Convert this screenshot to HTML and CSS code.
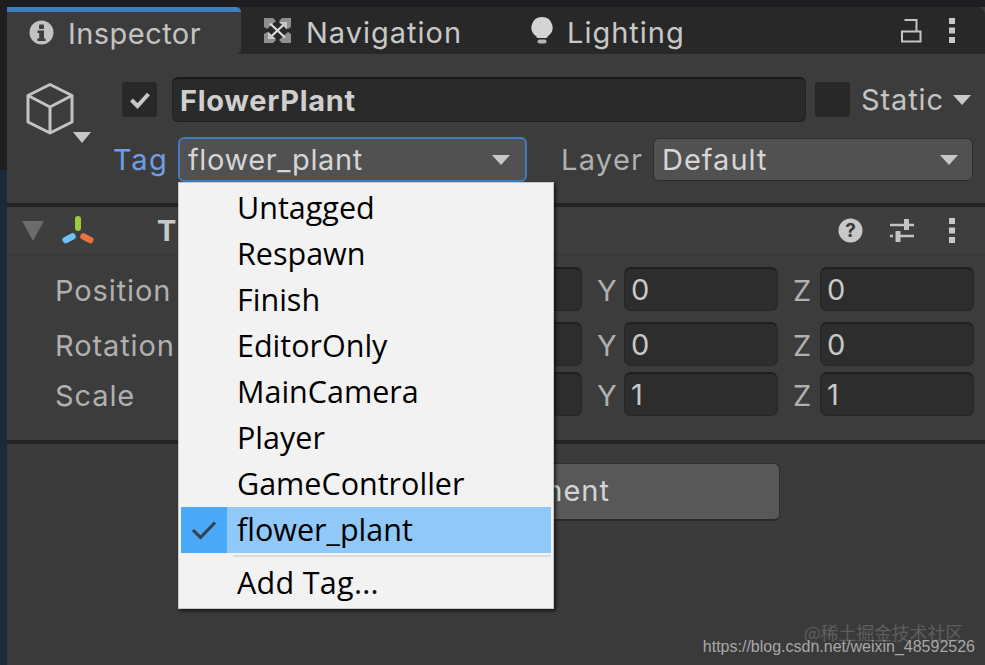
FILE: index.html
```html
<!DOCTYPE html>
<html lang="en">
<head>
<meta charset="utf-8">
<title>Inspector</title>
<link rel="stylesheet" href="styles.css">
</head>
<body>
<div class="window">
  <div class="tabs">
    <div class="tab active">
      <svg class="tab-icon" width="25" height="25" viewBox="0 0 25 25"><circle cx="12.500" cy="12.500" r="12" fill="#c2c2c2"/><rect x="10" y="4.500" width="5" height="4.400" rx="1" fill="#3c3c3c"/><path d="M8.500 10.500h6.500v8h1.600v2.400H8.400v-2.400h1.800v-5.600H8.500z" fill="#3c3c3c"/></svg>
      <span>Inspector</span>
    </div>
    <div class="tab nav">
      <svg class="tab-icon" width="27" height="25" viewBox="0 0 27 25"><path d="M0 0h9l3 3-9 8-3-2zM27 0h-9l-3 3 9 8 3-2zM0 25h9l3-3-9-8-3 2zM27 25h-9l-3-3 9-8 3 2z" fill="#8f8f8f"/><path d="M6 5.500L21 19.500M21 5.500L6 19.500" stroke="#dcdcdc" stroke-width="2.200"/><path d="M15 4h8v7.500zM12 21H4v-7.500z" fill="#c8c8c8"/></svg>
      <span>Navigation</span>
    </div>
    <div class="tab light">
      <svg class="tab-icon" width="22" height="27" viewBox="0 0 22 27"><path d="M11 0a10.500 10.500 0 0 1 6.200 19c-.7.600-1 1-1.200 2H6c-.2-1-.5-1.400-1.200-2A10.500 10.500 0 0 1 11 0z" fill="#d4d4d4"/><rect x="6.500" y="22.500" width="9" height="4" rx="2" fill="#b4b4b4"/></svg>
      <span>Lighting</span>
    </div>
    <div class="tab-tools">
      <svg width="21" height="25" viewBox="0 0 21 25"><path d="M1 13.500h18.500v10H1zM3.500 2H15.500V13" fill="none" stroke="#c4c4c4" stroke-width="2"/></svg>
      <svg class="dots" width="6" height="25" viewBox="0 0 6 25"><rect y="0" width="6" height="6" fill="#c8c8c8"/><rect y="9.500" width="6" height="6" fill="#c8c8c8"/><rect y="19" width="6" height="6" fill="#c8c8c8"/></svg>
    </div>
  </div>

  <div class="header">
    <div class="cube">
      <svg width="70" height="62" viewBox="0 0 70 62"><path d="M25 2.500L47 13.500V40L25 51 3 40V13.500zM3 13.500L25 25 47 13.500M25 25V51" fill="none" stroke="#c4c4c4" stroke-width="3" stroke-linejoin="round"/><path d="M48 50h18l-9 11z" fill="#c8c8c8"/></svg>
    </div>
    <div class="header-main">
      <div class="row-name">
        <div class="check on"><svg width="24" height="20" viewBox="0 0 24 20"><path d="M3.500 10l6 6L20.500 4" fill="none" stroke="#c8c8c8" stroke-width="4"/></svg></div>
        <div class="name-field">FlowerPlant</div>
        <div class="check"></div>
        <div class="static">Static</div>
        <i class="arrow"></i>
      </div>
      <div class="row-tag">
        <span class="tag-label">Tag</span>
        <div class="select focus"><span>flower_plant</span><i class="arrow"></i></div>
        <span class="layer-label">Layer</span>
        <div class="select layer"><span>Default</span><i class="arrow"></i></div>
      </div>
    </div>
  </div>

  <div class="comp-head">
    <svg class="fold" width="22" height="20" viewBox="0 0 22 20"><path d="M0 0h22L11 20z" fill="#6b6b6b"/></svg>
    <svg class="axes" width="34" height="30" viewBox="0 0 34 30"><rect x="14" y="0" width="6" height="15" rx="3" fill="#9ccc3c"/><rect x="1" y="19" width="14" height="6.500" rx="3" transform="rotate(-27 8 22)" fill="#6fc3f0"/><rect x="19" y="19" width="14" height="6.500" rx="3" transform="rotate(27 26 22)" fill="#ee6f3e"/></svg>
    <span class="comp-title">T</span>
    <div class="comp-tools">
      <svg width="25" height="25" viewBox="0 0 25 25"><circle cx="12.500" cy="12.500" r="12" fill="#c8c8c8"/><text x="12.500" y="19" class="q">?</text></svg>
      <svg width="26" height="25" viewBox="0 0 26 25"><path d="M1 7h14M20 7h5M1 18h3M9 18h16" fill="none" stroke="#c4c4c4" stroke-width="2.500"/><path d="M17.500 1v11M9 13v11" stroke="#c4c4c4" stroke-width="5"/></svg>
      <svg class="dots" width="6" height="25" viewBox="0 0 6 25"><rect y="0" width="6" height="6" fill="#c8c8c8"/><rect y="9.500" width="6" height="6" fill="#c8c8c8"/><rect y="19" width="6" height="6" fill="#c8c8c8"/></svg>
    </div>
  </div>

  <div class="comp-body">
    <div class="vec first">
      <span class="vec-label">Position</span>
      <span class="axis"></span><div class="num"></div>
      <span class="axis">Y</span><div class="num">0</div>
      <span class="axis">Z</span><div class="num">0</div>
    </div>
    <div class="vec second">
      <span class="vec-label">Rotation</span>
      <span class="axis"></span><div class="num"></div>
      <span class="axis">Y</span><div class="num">0</div>
      <span class="axis">Z</span><div class="num">0</div>
    </div>
    <div class="vec">
      <span class="vec-label">Scale</span>
      <span class="axis"></span><div class="num"></div>
      <span class="axis">Y</span><div class="num">1</div>
      <span class="axis">Z</span><div class="num">1</div>
    </div>
  </div>

  <div class="footer">
    <div class="add-btn">ment</div>
    <div class="marks">
      <span class="mark-cn">@稀土掘金技术社区</span>
      <span class="mark-url">https://blog.csdn.net/weixin_48592526</span>
    </div>
  </div>
</div>

<div class="menu">
  <div class="item">Untagged</div>
  <div class="item">Respawn</div>
  <div class="item">Finish</div>
  <div class="item">EditorOnly</div>
  <div class="item">MainCamera</div>
  <div class="item">Player</div>
  <div class="item">GameController</div>
  <div class="item selected">
    <span class="tick"><svg width="26" height="20" viewBox="0 0 26 20"><path d="M2 10l7.500 7.500L24 2.500" fill="none" stroke="#37414d" stroke-width="3"/></svg></span>
    flower_plant
  </div>
  <div class="sep"></div>
  <div class="item add">Add Tag...</div>
</div>
</body>
</html>
```
FILE: styles.css
```css
* { box-sizing: border-box; }
html, body { margin: 0; padding: 0; }
body {
  width: 985px; height: 665px; overflow: hidden; position: relative;
  background: linear-gradient(to bottom, #1d1e21 0, #1d1e21 170px, #1b2a38 170px, #1b2a38 100%);
  font-family: "Inter", "Open Sans", sans-serif;
  color: #c4c4c4;
}
.window {
  margin: 7px 0 0 7px; height: 658px; background: #3c3c3c;
  display: flex; flex-direction: column;
}
.tabs {
  height: 47px; flex: none; background: #282828; display: flex; align-items: center;
  font-size: 29px; letter-spacing: 1px; border-radius: 0 8px 0 0; color: #c8c8c8;
}
.tab { display: flex; align-items: center; height: 47px; flex: none; }
.tab span { padding-top: 3px; }
.tab.active {
  width: 234px; background: #3c3c3c; border-top: 5px solid #3f7cc0;
  padding-left: 22px; gap: 14px; border-radius: 0 5px 5px 0; color: #c4c4c4; letter-spacing: .45px;
}
.tab.active span { padding-top: 0; }
.tab.active svg { margin-bottom: 1px; }
.tab.nav { width: 266px; padding-left: 23px; gap: 15px; }
.tab.light { gap: 14px; margin-left: 24px; }
.tab-tools { margin-left: auto; display: flex; align-items: center; gap: 27px; padding-right: 30px; }
.header { height: 153px; flex: none; display: flex; border-bottom: 4px solid #232323; }
.cube { padding: 28px 0 0 18px; width: 115px; flex: none; }
.header-main { flex: 1; display: flex; flex-direction: column; }
.row-name { display: flex; align-items: center; margin-top: 23px; height: 45px; }
.check {
  width: 35px; height: 35px; background: #282828; border-radius: 3px;
  display: flex; align-items: center; justify-content: center; flex: none;
}
.name-field {
  width: 634px; height: 45px; margin: 0 9px 0 15px; background: #2a2a2a;
  border: 1px solid #212121; border-top: 2px solid #1a1a1a; border-radius: 6px;
  font-weight: 700; font-size: 29px; color: #cfcfcf; padding-left: 7px; line-height: 44px; letter-spacing: .7px;
}
.static { font-size: 29px; margin-left: 11px; letter-spacing: .9px; }
.arrow {
  width: 0; height: 0; border: 9px solid transparent; border-top: 10px solid #c8c8c8; border-bottom: 0; flex: none;
}
.row-name .arrow { margin-left: 9px; }
.row-tag { display: flex; align-items: center; margin-top: 15px; height: 45px; font-size: 29px; letter-spacing: 1px; }
.tag-label { color: #6f9fe0; width: 65px; margin-left: -9px; flex: none; letter-spacing: 1.600px; }
.layer-label { width: 92px; margin-left: 34px; color: #b0b0b0; flex: none; letter-spacing: 1.300px; }
.select {
  height: 43px; background: #515151; border: 1px solid #2d2d2d; border-radius: 6px;
  display: flex; align-items: center; justify-content: space-between; flex: none;
  color: #d6d6d6; padding: 0 14px 0 8px; width: 320px;
}
.select.focus { width: 349px; height: 45px; border: 2px solid #3f7cc0; padding-left: 8px; padding-right: 15px; letter-spacing: .6px; }
.comp-head {
  height: 48px; flex: none; display: flex; align-items: center; background: #3e3e3e;
  border-bottom: 1px solid #363636;
}
.fold { margin-left: 15px; }
.axes { margin-left: 17px; }
.comp-title { font-weight: 700; font-size: 29px; color: #c8c8c8; margin-left: 62px; }
.comp-tools { margin-left: auto; display: flex; align-items: center; gap: 26px; padding-right: 30px; }
.comp-tools .dots { margin-left: 8px; }
.comp-body { height: 189px; flex: none; background: #3c3c3c; border-bottom: 4px solid #232323; padding: 12px 12px 0 49px; }
.vec { display: flex; align-items: center; height: 44px; font-size: 29px; letter-spacing: .8px; margin-bottom: 11px; }
.vec.second { margin-bottom: 6px; }
.vec-label { width: 345px; color: #b0b0b0; flex: none; text-indent: -1px; letter-spacing: .9px; padding-top: 2px; }
.axis { width: 27px; color: #b0b0b0; flex: none; padding-top: 2px; }
.num {
  height: 44px; width: 154px; margin-right: 15px; background: #2d2d2d; border: 1px solid #262626; flex: none;
  border-top: 2px solid #1f1f1f; border-radius: 7px; padding-left: 6px; line-height: 42px; color: #c8c8c8;
}
.num:last-child { margin-right: 0; }
.footer { flex: 1; position: relative; background: #3a3a3a; }
.add-btn {
  position: absolute; left: 191px; top: 19px; width: 582px; height: 58px;
  background: #585858; border: 1px solid #2f2f2f; border-bottom: 2px solid #2a2a2a; border-radius: 6px;
  padding-left: 338px; line-height: 54px; font-size: 29px; color: #d4d4d4; letter-spacing: 1px;
}
.marks { position: absolute; right: 10px; top: 177px; display: flex; flex-direction: column; align-items: flex-end; }
.mark-cn { font: 18px "Noto Sans CJK SC", sans-serif; color: #5e5e5e; margin-right: 12px; line-height: 22px; letter-spacing: -.2px; }
.mark-url { font: 16px "Liberation Sans", Arial, sans-serif; color: #a8a8a8; line-height: 14px; margin-top: -3px; }
.menu {
  position: absolute; left: 178px; top: 182px; width: 376px; height: 427px;
  background: #f2f2f2; border: 1px solid #c8c8c8; padding: 3px 2px;
  box-shadow: 2px 2px 3px rgba(0,0,0,.6);
  font-family: "Open Sans", "Noto Sans", sans-serif; color: #000; font-size: 30.500px;
}
.item { height: 46px; line-height: 42px; padding-left: 56px; position: relative; white-space: nowrap; }
.item.selected { background: #90c8f7; margin-top: -1px; line-height: 44px; }
.tick {
  position: absolute; left: 0; top: 0; width: 46px; height: 46px; background: #4aa8f8;
  display: flex; align-items: center; justify-content: center;
}
.sep { height: 2px; margin: 2px 0 2px 52px; background: #dcdcdc; }
.item.add { line-height: 46px; letter-spacing: .3px; }
.q { font: 700 19px "Inter", sans-serif; fill: #3c3c3c; text-anchor: middle; }
```
